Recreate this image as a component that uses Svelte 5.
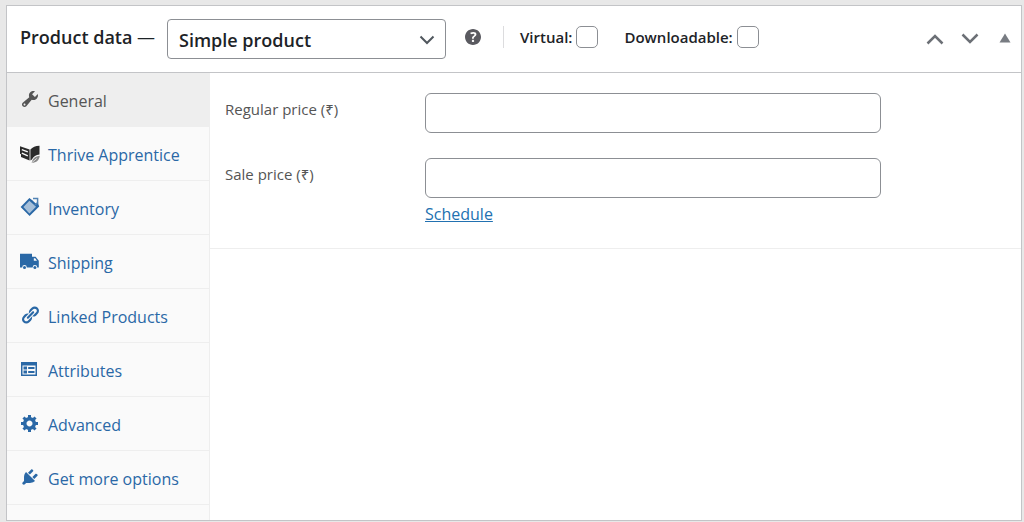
<script lang="ts">
	type Tab = { id: string; label: string };

	const tabs: Tab[] = [
		{ id: 'general', label: 'General' },
		{ id: 'thrive', label: 'Thrive Apprentice' },
		{ id: 'inventory', label: 'Inventory' },
		{ id: 'shipping', label: 'Shipping' },
		{ id: 'linked', label: 'Linked Products' },
		{ id: 'attributes', label: 'Attributes' },
		{ id: 'advanced', label: 'Advanced' },
		{ id: 'more', label: 'Get more options' }
	];

	let active = $state('general');
	let productType = $state('simple');
	let virtual = $state(false);
	let downloadable = $state(false);
	let regularPrice = $state('');
	let salePrice = $state('');

	function select(e: MouseEvent, id: string) {
		e.preventDefault();
		active = id;
	}
</script>

{#snippet icon(id: string)}
	<svg class="icon" viewBox="0 0 20 20" aria-hidden="true">
		{#if id === 'general'}
			<path d="M16.68 9.77c-1.34 1.34-3.3 1.67-4.95.99l-5.41 6.52c-.99.99-2.59.99-3.58 0s-.99-2.59 0-3.57l6.52-5.42c-.68-1.65-.35-3.61.99-4.95 1.28-1.28 3.12-1.62 4.72-1.06l-2.89 2.89 2.82 2.82 2.86-2.87c.53 1.58.18 3.39-1.08 4.65zM3.81 16.21c.4.39 1.04.39 1.43 0 .4-.4.4-1.04 0-1.43-.39-.4-1.03-.4-1.43 0-.39.39-.39 1.03 0 1.43z" />
		{:else if id === 'thrive'}
			<path fill="#2b2b2b" d="M0 3.2l9.6 3.3v11L1 14v-2.8l-1-.4zM19.5 2.8v8.6c-3.6.2-6 2-7.600 5.200l-1.500 1V6.600c2.200-2.300 5-3.600 9.100-3.800z" />
			<path fill="none" stroke="#fafafa" stroke-width="1.4" d="M1.8 6.6l6 2.2M1.8 10.200l6 2.600" />
			<path fill="#8a8a8a" d="M19.8 12.800c-.8 4.800-3 6.900-8.200 7.100 1-4.300 3.600-6.700 8.200-7.100z" />
			<path fill="none" stroke="#fafafa" stroke-width=".7" d="M11.4 20l5.400-4.600" />
		{:else if id === 'inventory'}
			<path d="M9.4 1l4.200 3.200L17.4 2l1 5.2 .8 2.200L9.600 19 .6 10z" />
			<path fill="#a5bfd9" d="M9.4 3.8l6.600 6-6.600 6.600L3.400 10z" />
			<path fill="#fafafa" d="M13.8 2h3.400v3.200l-1.400 1.200-2.400-2.200z" />
			<path fill="none" stroke="#5283b4" stroke-width="1.5" d="M13 1.6h4.600v4.200l-2.800 2" />
		{:else if id === 'shipping'}
			<path d="M0 2.800h12v3h3.600l3.200 4v6.600h-1.600a2.300 2.300 0 0 0-4.600 0H6.800a2.300 2.300 0 0 0-4.600 0H0z" />
			<circle cx="4.5" cy="16.6" r="1.5" />
			<circle cx="14.900" cy="16.6" r="1.5" />
			<path fill="#fafafa" d="M13.8 7.200h1.400l1.800 2.600h-3.200z" />
		{:else if id === 'linked'}
			<path d="M17.74 2.76c1.68 1.69 1.68 4.41 0 6.1l-1.53 1.52c-1.12 1.12-2.7 1.47-4.14 1.09l2.62-2.61.76-.77.76-.76c.84-.84.84-2.2 0-3.04-.84-.85-2.2-.85-3.04 0l-.77.76-3.38 3.38c-.37-1.44-.02-3.02 1.1-4.14l1.52-1.53c1.69-1.68 4.42-1.68 6.1 0zM8.59 13.43l5.34-5.34c.42-.42.42-1.1 0-1.52-.44-.43-1.13-.39-1.53 0l-5.33 5.34c-.42.42-.42 1.1 0 1.52.44.43 1.13.39 1.52 0zm-.76 2.29l4.14-4.15c.38 1.44.03 3.02-1.09 4.14l-1.52 1.53c-1.69 1.68-4.41 1.68-6.1 0-1.68-1.68-1.68-4.42 0-6.1l1.53-1.52c1.12-1.12 2.7-1.47 4.14-1.1l-4.14 4.15c-.85.84-.85 2.2 0 3.05.84.84 2.2.84 3.04 0z" />
		{:else if id === 'attributes'}
			<path fill-rule="evenodd" d="M1 3h16v14H1zM2.500 6.500v9h13v-9z" />
			<path d="M3.500 7.500H7v3H3.500zM3.500 11.500H7v3H3.500zM8.200 8h6.300v2H8.200zM8.200 12h6.300v2H8.200z" />
		{:else if id === 'advanced'}
			<path d="M18 12h-2.18c-.17.7-.44 1.35-.81 1.93l1.54 1.54-2.1 2.1-1.54-1.54c-.58.36-1.23.63-1.91.79V19H8v-2.18c-.68-.16-1.33-.43-1.91-.79l-1.54 1.54-2.12-2.12 1.54-1.54c-.36-.58-.63-1.23-.79-1.91H1V9.03h2.17c.16-.7.44-1.35.8-1.94L2.43 5.55l2.1-2.1 1.54 1.54c.58-.37 1.24-.64 1.93-.81V2h3v2.18c.68.16 1.33.43 1.91.79l1.54-1.54 2.12 2.12-1.54 1.54c.36.59.64 1.24.8 1.94H18V12zm-8.5 1.5c1.66 0 3-1.34 3-3s-1.34-3-3-3-3 1.34-3 3 1.34 3 3 3z" />
		{:else}
			<path d="M13.11 4.36L9.87 7.6 8 5.73l3.24-3.24c.35-.34 1.05-.2 1.56.32.52.51.66 1.21.31 1.55zm-8 1.77l.91-1.12 9.01 9.01-1.19.84c-.71.71-2.63 1.16-3.82 1.16H6.14L4.9 17.26c-.59.59-1.54.59-2.12 0-.59-.58-.59-1.53 0-2.12l1.24-1.24v-3.88c0-1.13.4-3.19 1.09-3.89zm7.26 3.97l3.24-3.24c.34-.35 1.04-.21 1.55.31.52.51.66 1.21.31 1.55l-3.24 3.25z" />
		{/if}
	</svg>
{/snippet}

<section class="postbox">
	<header>
		<label class="title" for="product-type">Product data <span>—</span></label>
		<div class="select">
			<select id="product-type" bind:value={productType}>
				<option value="simple">Simple product</option>
				<option value="grouped">Grouped product</option>
				<option value="external">External/Affiliate product</option>
				<option value="variable">Variable product</option>
			</select>
			<svg viewBox="0 0 16 10" aria-hidden="true"><path d="M1.5 1.5L8 8l6.5-6.5" /></svg>
		</div>
		<button class="help" type="button" aria-label="Help">
			<svg viewBox="3 3 14 14" aria-hidden="true">
				<path d="M17 10c0-3.87-3.14-7-7-7-3.87 0-7 3.13-7 7s3.13 7 7 7c3.86 0 7-3.13 7-7zm-6.3 1.48H9.14v-.43c0-.38.08-.7.24-.98s.46-.57.88-.89c.41-.29.68-.53.81-.71.14-.18.2-.39.2-.62 0-.25-.09-.44-.28-.58-.19-.13-.45-.19-.79-.19-.58 0-1.25.15-2 .46l-.64-1.28c.87-.49 1.8-.74 2.77-.74.81 0 1.45.2 1.92.58.48.39.71.91.71 1.55 0 .43-.09.8-.29 1.11-.19.32-.57.67-1.11 1.06-.38.28-.61.49-.71.63-.1.15-.15.34-.15.57v.46zm-1.47 2.74c-.18-.17-.27-.42-.27-.73 0-.33.08-.58.26-.75s.43-.25.77-.25c.32 0 .57.09.75.26s.27.42.27.74c0 .3-.09.55-.27.72-.18.18-.43.27-.75.27-.33 0-.58-.09-.76-.26z" />
			</svg>
		</button>
		<div class="checks">
			<label>Virtual:<input type="checkbox" bind:checked={virtual} /></label>
			<label>Downloadable:<input type="checkbox" bind:checked={downloadable} /></label>
		</div>
		<div class="handles">
			<button type="button" aria-label="Move up">
				<svg width="18" height="12" viewBox="0 0 18 12"><path class="line" d="M1.5 10.5L9 3l7.5 7.5" /></svg>
			</button>
			<button type="button" aria-label="Move down">
				<svg width="18" height="12" viewBox="0 0 18 12"><path class="line" d="M1.5 1.5L9 9l7.5-7.5" /></svg>
			</button>
			<button class="toggle" type="button" aria-label="Toggle panel">
				<svg width="12" height="12" viewBox="0 0 12 12"><path d="M.5 9.500l5.500-9 5.500 9z" /></svg>
			</button>
		</div>
	</header>

	<div class="inside">
		<nav>
			{#each tabs as tab (tab.id)}
				<a href="#{tab.id}" class:active={active === tab.id} onclick={(e) => select(e, tab.id)}>
					{@render icon(tab.id)}
					<span>{tab.label}</span>
				</a>
			{/each}
		</nav>

		<div class="panel">
			<div class="pricing">
				<div class="field">
					<label for="regular-price">Regular price (₹)</label>
					<input id="regular-price" type="text" bind:value={regularPrice} />
				</div>
				<div class="field">
					<label for="sale-price">Sale price (₹)</label>
					<div class="control">
						<input id="sale-price" type="text" bind:value={salePrice} />
						<a href="#schedule">Schedule</a>
					</div>
				</div>
			</div>
		</div>
	</div>
</section>

<style>
	:global(html) {
		height: 100%;
	}

	:global(body) {
		box-sizing: border-box;
		min-height: 100%;
		display: flex;
		padding: 5px 2px 1px 6px;
		background: #e8e8e8;
	}

	:global(#app) {
		flex: 1;
		display: flex;
	}

	.postbox,
	.postbox * {
		box-sizing: border-box;
	}

	.postbox {
		flex: 1;
		display: flex;
		flex-direction: column;
		background: #fff;
		border: 1px solid #c3c4c7;
		font-family: 'Open Sans', 'Noto Sans', sans-serif;
		font-size: 15px;
		color: #1d2327;
	}

	header {
		display: flex;
		align-items: center;
		min-height: 67px;
		padding: 0 10px 0 13px;
		border-bottom: 1px solid #c3c4c7;
	}

	.title {
		width: 147px;
		padding-bottom: 4px;
		font-size: 18px;
		font-weight: 600;
		white-space: nowrap;
	}

	.title span {
		font-weight: 400;
	}

	.select {
		position: relative;
		width: 279px;
	}

	.select select {
		appearance: none;
		width: 100%;
		height: 40px;
		padding: 1px 36px 0 11px;
		border: 1px solid #8c8f94;
		border-radius: 4px;
		background: #fff;
		color: #1d2327;
		font: inherit;
		font-size: 18px;
		font-weight: 600;
	}

	.select svg {
		position: absolute;
		top: 16px;
		right: 11px;
		width: 16px;
		height: 10px;
		fill: none;
		stroke: #50575e;
		stroke-width: 2;
		pointer-events: none;
	}

	button {
		display: flex;
		padding: 0;
		border: 0;
		background: none;
		cursor: pointer;
	}

	.help {
		margin: 0 22px 4px 19px;
	}

	.help svg {
		width: 16px;
		height: 16px;
		fill: #5a5a60;
	}

	.checks {
		display: flex;
		align-items: center;
		gap: 26px;
		height: 22px;
		margin-bottom: 5px;
		padding-left: 16px;
		border-left: 1px solid #dcdcde;
	}

	.checks label {
		display: flex;
		align-items: center;
		gap: 4px;
		font-weight: 600;
	}

	.checks input {
		appearance: none;
		width: 22px;
		height: 22px;
		margin: 0;
		border: 1px solid #8c8f94;
		border-radius: 5px;
		background: #fff;
	}

	.checks input:checked {
		background: #2271b1;
	}

	.handles {
		display: flex;
		align-items: center;
		gap: 17px;
		margin-left: auto;
	}

	.handles svg {
		fill: #787c82;
	}

	.handles .line {
		fill: none;
		stroke: #6c7076;
		stroke-width: 2.5;
	}

	.toggle {
		margin-left: 3px;
	}

	.inside {
		flex: 1;
		display: flex;
	}

	nav {
		width: 203px;
		background: #fafafa;
		border-right: 1px solid #eee;
	}

	nav a {
		display: flex;
		align-items: center;
		gap: 8px;
		height: 54px;
		padding-left: 13px;
		border-bottom: 1px solid #eee;
		color: #2a68a6;
		font-size: 16px;
		text-decoration: none;
	}

	nav a span {
		padding-top: 2px;
	}

	nav a.active {
		background: #eee;
		color: #555;
	}

	.icon {
		flex: none;
		width: 20px;
		height: 20px;
		margin-bottom: 2px;
		fill: currentColor;
	}

	.panel {
		flex: 1;
	}

	.pricing {
		display: flex;
		flex-direction: column;
		gap: 25px;
		padding: 20px 140px 22px 15px;
		border-bottom: 1px solid #eee;
	}

	.field {
		display: flex;
		align-items: flex-start;
	}

	.field label {
		width: 200px;
		padding-top: 4px;
		color: #555;
		line-height: 24px;
	}

	.field input {
		flex: 1;
		width: 100%;
		height: 40px;
		padding: 0 8px;
		border: 1px solid #8c8f94;
		border-radius: 6px;
		background: #fff;
		font: inherit;
	}

	.control {
		flex: 1;
		display: flex;
		flex-direction: column;
		align-items: flex-start;
		gap: 4px;
	}

	.control input {
		flex: none;
	}

	.control a {
		color: #2271b1;
		font-size: 16px;
		line-height: 24px;
	}
</style>
